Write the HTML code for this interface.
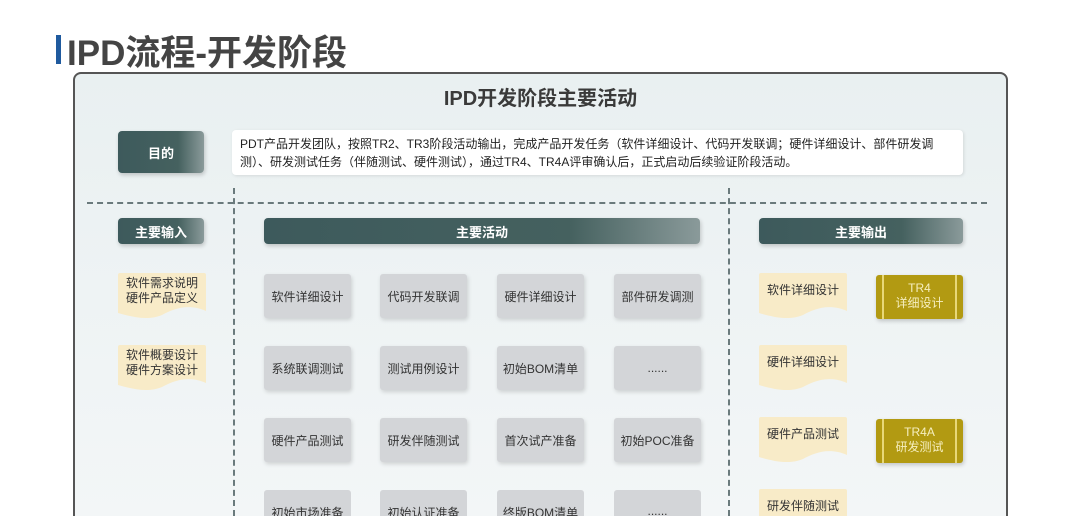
<!DOCTYPE html>
<html style="width:1080px;height:516px;overflow:hidden"><head><meta charset="utf-8"><style>
*{margin:0;padding:0;box-sizing:border-box}
body{width:1080px;height:516px;overflow:hidden;background:#fff;font-family:"Liberation Sans","Noto Sans CJK SC",sans-serif;position:relative}
.a{position:absolute}
.dk{background:linear-gradient(90deg,#3d5a5c 0%,#45615f 70%,#8a9a9a 100%);color:#fff;font-weight:bold;font-size:13px;display:flex;align-items:center;justify-content:center;border-radius:4px;box-shadow:1px 2px 4px rgba(0,0,0,.2)}
.g{background:#d3d5d8;color:#333;font-size:12px;display:flex;align-items:center;justify-content:center;border-radius:3px;width:87px;height:44px;box-shadow:1px 2px 4px rgba(0,0,0,.15)}
.g.c{height:26px;align-items:flex-start;padding-top:14px;overflow:hidden;border-radius:3px 3px 0 0;box-shadow:none}
.doc{width:88px;height:46px;font-size:12px;color:#333;line-height:15px}
.doc svg{position:absolute;left:0;top:0}
.doc span{position:absolute;left:0;right:0;text-align:center}
.gold{background:#b29a12;color:#f6efc0;font-size:12px;width:87px;height:44px;border-radius:3px;text-align:center;line-height:15px;padding-top:6px;box-shadow:1px 2px 4px rgba(0,0,0,.2)}
.gold:before,.gold:after{content:"";position:absolute;top:0;bottom:0;width:2px;background:#e8d878}
.gold:before{left:6px}.gold:after{right:6px}
</style></head><body>
<div class="a" style="left:56px;top:35px;width:5px;height:29px;background:#1f5a9e"></div>
<div class="a" style="left:67px;top:25px;font-size:35px;font-weight:bold;color:#444">IPD流程-开发阶段</div>
<div class="a" style="left:73px;top:72px;width:935px;height:444px;border:2px solid #555;border-bottom:none;border-radius:8px 8px 0 0;background:linear-gradient(180deg,#e9f0f1,#eef3f4 50%,#f3f6f7)"></div>
<div class="a" style="left:73px;top:82px;width:935px;text-align:center;font-size:20px;font-weight:bold;color:#3a3a3a">IPD开发阶段主要活动</div>
<div class="a dk" style="left:118px;top:131px;width:86px;height:42px">目的</div>
<div class="a" style="left:232px;top:130px;width:731px;height:45px;background:#fff;border-radius:4px;font-size:12px;color:#222;padding:5px 0 0 8px;line-height:18px;box-shadow:1px 1px 3px rgba(0,0,0,.1)">PDT产品开发团队，按照TR2、TR3阶段活动输出，完成产品开发任务（软件详细设计、代码开发联调；硬件详细设计、部件研发调测）、研发测试任务（伴随测试、硬件测试），通过TR4、TR4A评审确认后，正式启动后续验证阶段活动。</div>
<div class="a" style="left:87px;top:202px;width:900px;border-top:2px dashed #6a7a7c"></div>
<div class="a" style="left:233px;top:188px;height:328px;border-left:2px dashed #6a7a7c"></div>
<div class="a" style="left:728px;top:188px;height:328px;border-left:2px dashed #6a7a7c"></div>
<div class="a dk" style="left:118px;top:218px;width:86px;height:26px">主要输入</div>
<div class="a dk" style="left:264px;top:218px;width:436px;height:26px">主要活动</div>
<div class="a dk" style="left:759px;top:218px;width:204px;height:26px">主要输出</div>

<svg width="0" height="0" style="position:absolute"><defs><path id="dp" d="M0 2 Q0 0 2 0 H86 Q88 0 88 2 V38 C70 30 55 36 44 42 C30 48 14 44 0 40 Z"/></defs></svg>
<div class="a doc" style="left:118px;top:273px"><svg width="88" height="48"><use href="#dp" fill="#f8ebc8"/></svg><span style="top:3px">软件需求说明<br>硬件产品定义</span></div>
<div class="a doc" style="left:118px;top:345px"><svg width="88" height="48"><use href="#dp" fill="#f8ebc8"/></svg><span style="top:3px">软件概要设计<br>硬件方案设计</span></div>

<div class="a g" style="left:264px;top:274px">软件详细设计</div>
<div class="a g" style="left:380px;top:274px">代码开发联调</div>
<div class="a g" style="left:497px;top:274px">硬件详细设计</div>
<div class="a g" style="left:614px;top:274px">部件研发调测</div>
<div class="a g" style="left:264px;top:346px">系统联调测试</div>
<div class="a g" style="left:380px;top:346px">测试用例设计</div>
<div class="a g" style="left:497px;top:346px">初始BOM清单</div>
<div class="a g" style="left:614px;top:346px">......</div>
<div class="a g" style="left:264px;top:418px">硬件产品测试</div>
<div class="a g" style="left:380px;top:418px">研发伴随测试</div>
<div class="a g" style="left:497px;top:418px">首次试产准备</div>
<div class="a g" style="left:614px;top:418px">初始POC准备</div>
<div class="a g c" style="left:264px;top:490px">初始市场准备</div>
<div class="a g c" style="left:380px;top:490px">初始认证准备</div>
<div class="a g c" style="left:497px;top:490px">终版BOM清单</div>
<div class="a g c" style="left:614px;top:490px">......</div>

<div class="a doc" style="left:759px;top:273px"><svg width="88" height="48"><use href="#dp" fill="#f8ebc8"/></svg><span style="top:10px">软件详细设计</span></div>
<div class="a doc" style="left:759px;top:345px"><svg width="88" height="48"><use href="#dp" fill="#f8ebc8"/></svg><span style="top:10px">硬件详细设计</span></div>
<div class="a doc" style="left:759px;top:417px"><svg width="88" height="48"><use href="#dp" fill="#f8ebc8"/></svg><span style="top:10px">硬件产品测试</span></div>
<div class="a" style="left:759px;top:489px;width:88px;height:27px;background:#f8ebc8;border-radius:2px 2px 0 0;font-size:12px;color:#333;text-align:center;padding-top:10px;overflow:hidden;line-height:15px">研发伴随测试</div>
<div class="a gold" style="left:876px;top:275px">TR4<br>详细设计</div>
<div class="a gold" style="left:876px;top:419px">TR4A<br>研发测试</div>
</body></html>
